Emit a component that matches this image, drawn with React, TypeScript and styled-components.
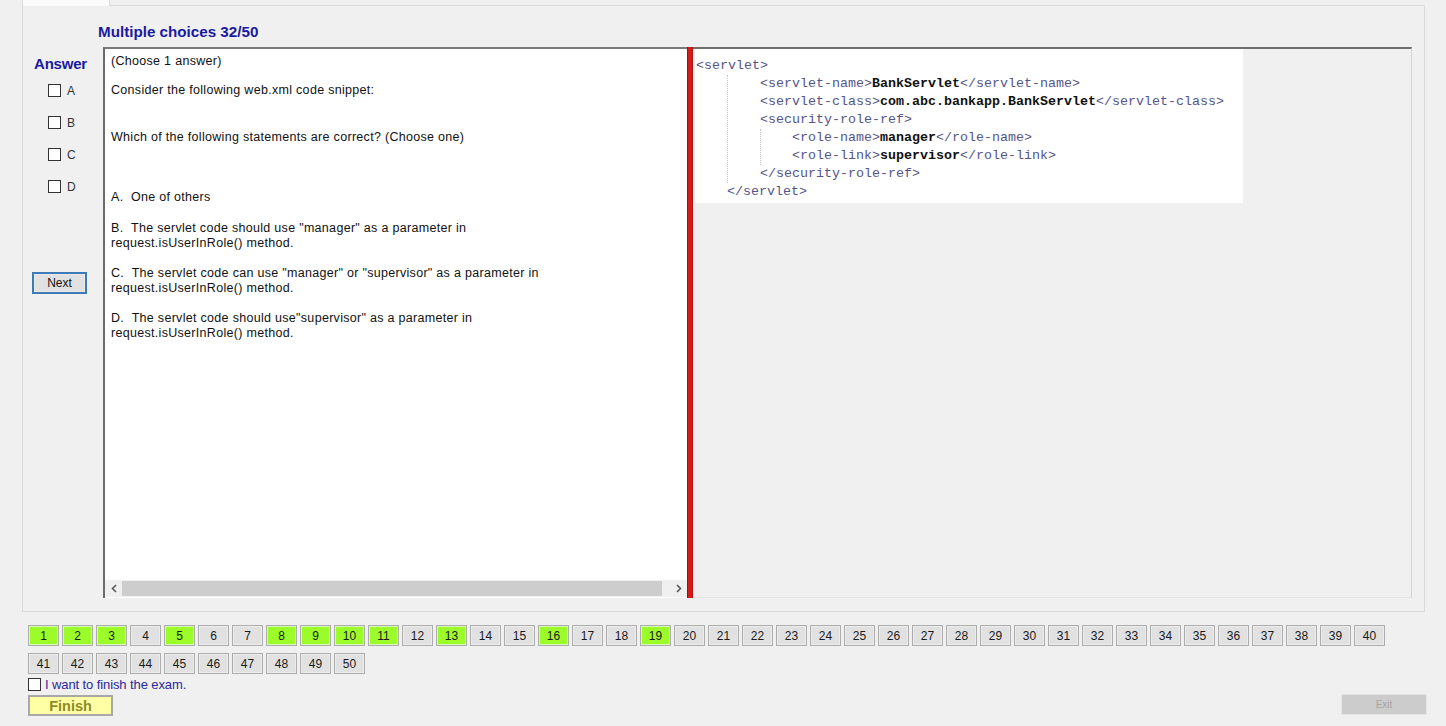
import React from "react";
import styled, { createGlobalStyle } from "styled-components";

const Global = createGlobalStyle`
  html, body { margin: 0; padding: 0; background: #f0f0f0; }
  body { font-family: "Liberation Sans", Arial, sans-serif; color: #000; }
  * { box-sizing: border-box; }
`;

const Page = styled.div`
  width: 1446px;
  height: 726px;
  display: flex;
  flex-direction: column;
  background: #f0f0f0;
  overflow: hidden;
`;

const TabStrip = styled.div`
  height: 6px;
  display: flex;
  margin-right: 21px;
`;

const Tab = styled.div`
  width: 88px;
  height: 6px;
  margin-left: 22px;
  background: #fbfbfb;
  border-left: 1px solid #d9d9d9;
  border-right: 1px solid #d9d9d9;
`;

const TabLine = styled.div`
  flex: 1;
  border-bottom: 1px solid #dadada;
`;

const MainPanel = styled.div`
  margin: 0 21px 0 22px;
  height: 606px;
  border: 1px solid #dadada;
  border-top: none;
  background: #f0f0f0;
  display: flex;
  flex-direction: column;
`;

const TitleRow = styled.div`
  height: 41px;
  padding: 17px 0 0 75px;
`;

const Title = styled.div`
  font-size: 15.2px;
  line-height: 17px;
  font-weight: bold;
  color: #1a1aa0;
`;

const Body = styled.div`
  display: flex;
  height: 551px;
  padding-right: 12px;
`;

const Sidebar = styled.div`
  width: 80px;
  display: flex;
  flex-direction: column;
  padding-top: 8px;
`;

const AnswerLabel = styled.div`
  font-size: 15px;
  line-height: 17px;
  font-weight: bold;
  color: #1a1aa0;
  padding-left: 11px;
  margin-bottom: 12px;
  letter-spacing: -0.2px;
`;

const OptionRow = styled.label`
  display: flex;
  align-items: center;
  height: 13px;
  margin-bottom: 19px;
  padding-left: 25px;
  font-size: 12px;
  color: #333;
`;

const Box = styled.span<{ $size?: number; $gap?: number }>`
  display: inline-block;
  width: ${(p) => p.$size ?? 13}px;
  height: ${(p) => p.$size ?? 13}px;
  border: 1px solid #333;
  background: #fff;
  margin-right: ${(p) => p.$gap ?? 6}px;
  flex: none;
`;

const NextButton = styled.button`
  margin: 60px 0 0 9px;
  width: 55px;
  height: 22px;
  border: 2px solid #3d7ab8;
  background: #e1e1e1;
  font-family: "Liberation Sans", Arial, sans-serif;
  font-size: 12px;
  color: #111;
  padding: 0;
  box-shadow: inset 0 0 0 1px #e9e9e9;
`;

const QuestionPane = styled.div`
  width: 584px;
  background: #fff;
  border-left: 2px solid #6b6b6b;
  border-top: 2px solid #7a7a7a;
  display: flex;
  flex-direction: column;
`;

const QuestionText = styled.div`
  flex: 1;
  padding: 5px 0 0 6px;
  font-size: 12.5px;
  line-height: 15px;
  letter-spacing: 0.3px;
  color: #111;
`;

const Para = styled.p<{ $gap: number }>`
  margin: ${(p) => p.$gap}px 0 0 0;
`;

const HScroll = styled.div`
  height: 17px;
  margin-bottom: 1px;
  background: #f0f0f0;
  display: flex;
  align-items: center;
`;

const ScrollArrow = styled.span`
  width: 17px;
  height: 17px;
  display: flex;
  align-items: center;
  justify-content: center;
`;

const ScrollThumb = styled.div`
  flex: 1;
  height: 15px;
  background: #cdcdcd;
  margin-right: 8px;
`;

const Splitter = styled.div`
  width: 6px;
  background: #d41c1c;
  border-left: 1px solid #a01010;
  border-right: 1px solid #b01414;
`;

const CodePane = styled.div`
  flex: 1;
  border-top: 2px solid #6e6e6e;
  border-right: 1px solid #d4d4d4;
  border-bottom: 1px solid #e4e4e4;
  padding-left: 2px;
`;

const CodeBox = styled.div`
  width: 548px;
  height: 154px;
  background: #fff;
  padding: 8px 0 0 1px;
  font-family: "Liberation Mono", "Courier New", monospace;
  font-size: 13.33px;
  line-height: 18px;
  white-space: pre;
`;

const Line = styled.div<{ $indent?: number }>`
  height: 18px;
  padding-left: ${(p) => p.$indent ?? 0}px;
`;

const Nest = styled.div<{ $offset: number; $pad: number }>`
  margin-left: ${(p) => p.$offset}px;
  padding-left: ${(p) => p.$pad}px;
  border-left: 1px dotted #c8c8c8;
`;

const Tag = styled.span`
  color: #55558a;
`;

const Val = styled.span`
  color: #111;
  font-weight: bold;
`;

const Bottom = styled.div`
  padding: 13px 19px 0 28px;
  display: flex;
  flex-direction: column;
`;

const NumGrid = styled.div`
  display: flex;
  flex-wrap: wrap;
  width: 1360px;
  column-gap: 3px;
  row-gap: 7px;
`;

const NumBtn = styled.div<{ $done: boolean }>`
  width: 31px;
  height: 21px;
  border: 1px solid #adadad;
  background: ${(p) => (p.$done ? "#9cfc2a" : "#e1e1e1")};
  box-shadow: inset 0 0 0 1px ${(p) => (p.$done ? "#d8f8b8" : "#ececec")};
  display: flex;
  align-items: center;
  justify-content: center;
  font-size: 12px;
  color: #1a1a1a;
`;

const FinishCheck = styled.label`
  display: flex;
  align-items: center;
  margin-top: 3px;
  height: 14px;
  font-size: 13px;
  color: #2a2a9a;
  letter-spacing: -0.1px;
`;

const Footer = styled.div`
  display: flex;
  justify-content: space-between;
  align-items: flex-start;
  margin-top: 4px;
`;

const FinishButton = styled.div`
  width: 85px;
  height: 21px;
  background: #ffffa6;
  border: 2px solid #a8a8a8;
  display: flex;
  align-items: center;
  justify-content: center;
  font-size: 14.5px;
  font-weight: bold;
  color: #8c8c20;
`;

const ExitButton = styled.div`
  width: 86px;
  height: 21px;
  margin-top: -1px;
  background: #cccccc;
  border: 1px solid #e4e4e4;
  display: flex;
  align-items: center;
  justify-content: center;
  font-size: 10px;
  color: #a4a4a4;
`;

const done = new Set([1, 2, 3, 5, 8, 9, 10, 11, 13, 16, 19]);

const Chevron = ({ dir }: { dir: "left" | "right" }) => (
  <svg width="6" height="9" viewBox="0 0 6 9">
    <polyline
      points={dir === "left" ? "5,1 1.5,4.5 5,8" : "1,1 4.5,4.5 1,8"}
      fill="none"
      stroke="#555"
      strokeWidth="1.5"
    />
  </svg>
);

export default function App() {
  return (
    <Page>
      <Global />
      <TabStrip>
        <Tab />
        <TabLine />
      </TabStrip>
      <MainPanel>
        <TitleRow>
          <Title>Multiple choices 32/50</Title>
        </TitleRow>
        <Body>
          <Sidebar>
            <AnswerLabel>Answer</AnswerLabel>
            {["A", "B", "C", "D"].map((l) => (
              <OptionRow key={l}>
                <Box />
                {l}
              </OptionRow>
            ))}
            <NextButton>Next</NextButton>
          </Sidebar>
          <QuestionPane>
            <QuestionText>
              <Para $gap={0}>(Choose 1 answer)</Para>
              <Para $gap={14}>Consider the following web.xml code snippet:</Para>
              <Para $gap={32}>Which of the following statements are correct? (Choose one)</Para>
              <Para $gap={45}>A.&nbsp; One of others</Para>
              <Para $gap={16}>
                B.&nbsp;&nbsp;The servlet code should use "manager" as a parameter in
                <br />
                request.isUserInRole() method.
              </Para>
              <Para $gap={15}>
                C.&nbsp;&nbsp;The servlet code can use "manager" or "supervisor" as a parameter in
                <br />
                request.isUserInRole() method.
              </Para>
              <Para $gap={15}>
                D.&nbsp;&nbsp;The servlet code should use"supervisor" as a parameter in
                <br />
                request.isUserInRole() method.
              </Para>
            </QuestionText>
            <HScroll>
              <ScrollArrow>
                <Chevron dir="left" />
              </ScrollArrow>
              <ScrollThumb />
              <ScrollArrow>
                <Chevron dir="right" />
              </ScrollArrow>
            </HScroll>
          </QuestionPane>
          <Splitter />
          <CodePane>
            <CodeBox>
              <Line>
                <Tag>&lt;servlet&gt;</Tag>
              </Line>
              <Nest $offset={31} $pad={32}>
                <Line>
                  <Tag>&lt;servlet-name&gt;</Tag>
                  <Val>BankServlet</Val>
                  <Tag>&lt;/servlet-name&gt;</Tag>
                </Line>
                <Line>
                  <Tag>&lt;servlet-class&gt;</Tag>
                  <Val>com.abc.bankapp.BankServlet</Val>
                  <Tag>&lt;/servlet-class&gt;</Tag>
                </Line>
                <Line>
                  <Tag>&lt;security-role-ref&gt;</Tag>
                </Line>
                <Nest $offset={0} $pad={31}>
                  <Line>
                    <Tag>&lt;role-name&gt;</Tag>
                    <Val>manager</Val>
                    <Tag>&lt;/role-name&gt;</Tag>
                  </Line>
                  <Line>
                    <Tag>&lt;role-link&gt;</Tag>
                    <Val>supervisor</Val>
                    <Tag>&lt;/role-link&gt;</Tag>
                  </Line>
                </Nest>
                <Line>
                  <Tag>&lt;/security-role-ref&gt;</Tag>
                </Line>
              </Nest>
              <Line $indent={31}>
                <Tag>&lt;/servlet&gt;</Tag>
              </Line>
            </CodeBox>
          </CodePane>
        </Body>
      </MainPanel>
      <Bottom>
        <NumGrid>
          {Array.from({ length: 50 }, (_, i) => i + 1).map((n) => (
            <NumBtn key={n} $done={done.has(n)}>
              {n}
            </NumBtn>
          ))}
        </NumGrid>
        <FinishCheck>
          <Box $size={13} $gap={4} />
          I want to finish the exam.
        </FinishCheck>
        <Footer>
          <FinishButton>Finish</FinishButton>
          <ExitButton>Exit</ExitButton>
        </Footer>
      </Bottom>
    </Page>
  );
}
